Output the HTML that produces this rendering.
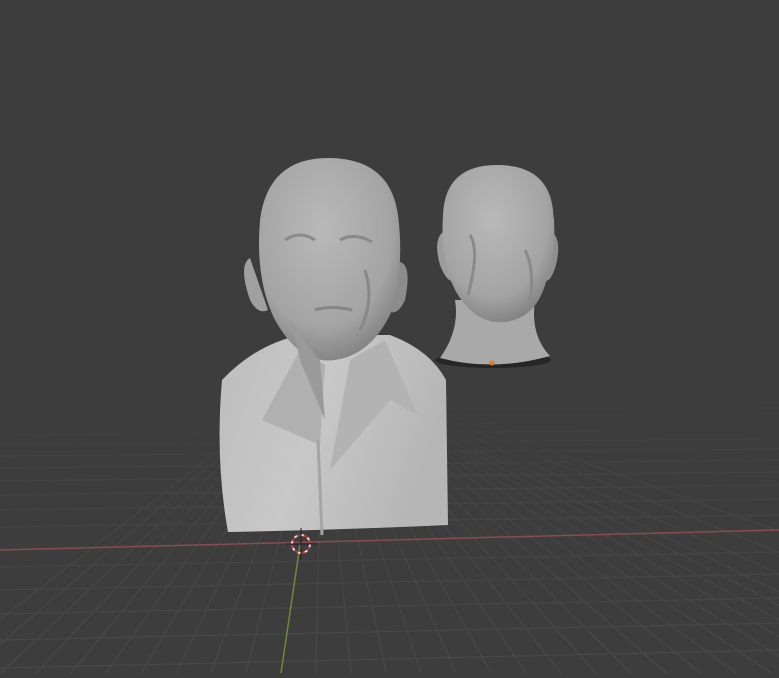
<!DOCTYPE html>
<html><head><style>html,body{margin:0;padding:0;background:#3d3d3d;overflow:hidden}</style></head>
<body>
<svg width="779" height="673" viewBox="0 0 779 673" xmlns="http://www.w3.org/2000/svg">
<defs>
<linearGradient id="fade" x1="0" y1="0" x2="0" y2="1">
<stop offset="0" stop-color="#fff" stop-opacity="0"/><stop offset="0.35" stop-color="#fff" stop-opacity="0.6"/><stop offset="1" stop-color="#fff" stop-opacity="1"/></linearGradient>
<mask id="m"><rect x="0" y="390" width="779" height="283" fill="url(#fade)"/></mask>
<radialGradient id="skin" cx="0.45" cy="0.35" r="0.7"><stop offset="0" stop-color="#b9b9b9"/><stop offset="0.7" stop-color="#a4a4a4"/><stop offset="1" stop-color="#7c7c7c"/></radialGradient>
<linearGradient id="shirt" x1="0" y1="0" x2="1" y2="0.3"><stop offset="0" stop-color="#bdbdbd"/><stop offset="0.5" stop-color="#c8c8c8"/><stop offset="1" stop-color="#b6b6b6"/></linearGradient>
</defs>
<rect width="779" height="673" fill="#3d3d3d"/>
<g mask="url(#m)" stroke="#4b4b4b" stroke-width="1">
<line x1="0" y1="400" x2="779" y2="398"/><line x1="0" y1="405" x2="779" y2="403"/><line x1="0" y1="411" x2="779" y2="408"/><line x1="0" y1="418" x2="779" y2="414"/><line x1="0" y1="426" x2="779" y2="422"/><line x1="0" y1="435" x2="779" y2="430"/><line x1="0" y1="445" x2="779" y2="439"/><line x1="0" y1="456" x2="779" y2="449"/><line x1="0" y1="468" x2="779" y2="460"/><line x1="0" y1="481" x2="779" y2="472"/><line x1="0" y1="495" x2="779" y2="485"/><line x1="0" y1="510" x2="779" y2="499"/><line x1="0" y1="527" x2="779" y2="515"/><line x1="0" y1="567" x2="779" y2="552"/><line x1="0" y1="590" x2="779" y2="574"/><line x1="0" y1="614" x2="779" y2="598"/><line x1="0" y1="640" x2="779" y2="623"/><line x1="0" y1="668" x2="779" y2="650"/>
<g transform="translate(322,370)">
<line x1="0" y1="0" x2="-391" y2="303"/><line x1="0" y1="0" x2="-356" y2="303"/><line x1="0" y1="0" x2="-321" y2="303"/><line x1="0" y1="0" x2="-286" y2="303"/><line x1="0" y1="0" x2="-251" y2="303"/><line x1="0" y1="0" x2="-216" y2="303"/><line x1="0" y1="0" x2="-181" y2="303"/><line x1="0" y1="0" x2="-146" y2="303"/><line x1="0" y1="0" x2="-111" y2="303"/><line x1="0" y1="0" x2="-76" y2="303"/><line x1="0" y1="0" x2="-6" y2="303"/><line x1="0" y1="0" x2="29" y2="303"/><line x1="0" y1="0" x2="64" y2="303"/><line x1="0" y1="0" x2="99" y2="303"/><line x1="0" y1="0" x2="134" y2="303"/><line x1="0" y1="0" x2="169" y2="303"/><line x1="0" y1="0" x2="204" y2="303"/><line x1="0" y1="0" x2="239" y2="303"/><line x1="0" y1="0" x2="274" y2="303"/><line x1="0" y1="0" x2="309" y2="303"/><line x1="0" y1="0" x2="344" y2="303"/><line x1="0" y1="0" x2="379" y2="303"/><line x1="0" y1="0" x2="414" y2="303"/><line x1="0" y1="0" x2="449" y2="303"/><line x1="0" y1="0" x2="484" y2="303"/><line x1="0" y1="0" x2="519" y2="303"/><line x1="0" y1="0" x2="554" y2="303"/><line x1="0" y1="0" x2="589" y2="303"/><line x1="0" y1="0" x2="624" y2="303"/><line x1="0" y1="0" x2="680" y2="303"/><line x1="0" y1="0" x2="760" y2="303"/><line x1="0" y1="0" x2="860" y2="303"/>
</g></g>
<line x1="0" y1="550" x2="779" y2="530" stroke="#8a4a52" stroke-width="1.5"/>
<line x1="300" y1="545" x2="281" y2="673" stroke="#6a8a3a" stroke-width="1.5"/>
<!-- right head -->
<ellipse cx="493" cy="360" rx="58" ry="8" fill="#262626"/>
<path d="M455,300 Q460,330 440,358 Q493,372 550,356 Q530,335 535,300 Z" fill="#a9a9a9"/>
<path d="M443,232 Q433,240 440,265 Q448,285 455,280 Z" fill="#9d9d9d"/>
<path d="M552,232 Q562,240 556,265 Q550,285 543,280 Z" fill="#8f8f8f"/>
<path d="M497,165 Q445,165 443,215 Q440,260 455,290 Q475,325 505,322 Q535,318 545,285 Q558,250 553,210 Q548,165 497,165 Z" fill="url(#skin)"/>
<path d="M468,295 Q480,250 470,235 M525,250 Q535,270 530,300" stroke="#8a8a8a" stroke-width="3" fill="none"/>
<circle cx="492" cy="363" r="2.5" fill="#d9822b"/>
<!-- left bust -->
<path d="M222,380 Q255,345 300,335 L390,335 Q430,350 446,380 L448,525 Q340,530 228,532 Q215,460 222,380 Z" fill="url(#shirt)"/>
<path d="M262,420 L300,350 L325,365 L320,445 Z" fill="#b0b0b0"/>
<path d="M350,360 L385,340 L418,415 L390,400 L330,470 Z" fill="#b3b3b3"/>
<path d="M318,440 L322,535" stroke="#a5a5a5" stroke-width="3"/>
<path d="M250,258 Q238,265 250,300 Q258,315 268,310 Z" fill="#a0a0a0"/>
<path d="M400,262 Q412,265 405,300 Q398,315 390,312 Z" fill="#8c8c8c"/>
<path d="M328,158 Q268,158 260,220 Q255,280 275,320 Q300,365 335,360 Q370,355 390,315 Q405,270 398,215 Q390,158 328,158 Z" fill="url(#skin)"/>
<path d="M290,320 Q295,330 320,360 L325,420 L300,360 Z" fill="#9a9a9a"/>
<path d="M365,270 Q375,300 360,330" stroke="#888" stroke-width="3" fill="none"/>
<path d="M285,240 Q300,230 315,240 M340,240 Q355,232 372,242" stroke="#8a8a8a" stroke-width="3" fill="none"/>
<path d="M315,310 Q330,305 352,310" stroke="#858585" stroke-width="3" fill="none"/>
<!-- 3d cursor -->
<circle cx="301" cy="544" r="9" fill="none" stroke="#ddd" stroke-width="2" stroke-dasharray="4,3"/>
<circle cx="301" cy="544" r="9" fill="none" stroke="#c33" stroke-width="2" stroke-dasharray="3,4" stroke-dashoffset="4"/>
<line x1="301" y1="528" x2="301" y2="560" stroke="#222" stroke-width="1"/>
<line x1="285" y1="544" x2="317" y2="544" stroke="#222" stroke-width="1"/>
</svg>
</body></html>
